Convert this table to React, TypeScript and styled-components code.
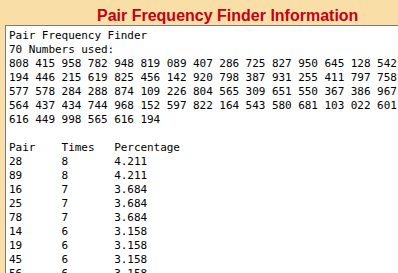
import React from "react";
import styled, { createGlobalStyle } from "styled-components";

const Global = createGlobalStyle`
  html, body {
    margin: 0;
    padding: 0;
    background: #f9dea8;
    overflow: hidden;
  }
  #root {
    width: 398px;
    height: 273px;
  }
`;

const Page = styled.div`
  width: 398px;
  height: 273px;
  display: flex;
  flex-direction: column;
  background: #f9dea8;
  overflow: hidden;
`;

const Header = styled.header`
  height: 25px;
  flex: none;
  display: flex;
  align-items: flex-end;
  padding-left: 97px;
  box-sizing: border-box;
`;

const Title = styled.h1`
  margin: 0;
  font-family: "Liberation Sans", Arial, sans-serif;
  font-weight: bold;
  font-size: 16px;
  line-height: 18px;
  color: #c60012;
  white-space: nowrap;
`;

const TextBox = styled.div`
  flex: 1;
  margin-left: 5px;
  background: #ffffff;
  border-top: 1px solid #7c7c7c;
  border-left: 1px solid #7c7c7c;
  padding: 3px 0 0 3px;
  overflow: hidden;
  font-family: "DejaVu Sans Mono", "Liberation Mono", monospace;
  font-size: 11px;
  line-height: 14px;
  letter-spacing: -0.05px;
  color: #000000;
`;

const Line = styled.div`
  white-space: pre;
  height: 14px;
`;

const Row = styled.div`
  display: grid;
  grid-template-columns: 52.6px 52.6px auto;
  height: 14px;
  white-space: pre;
`;

const numbers = [
  "808 415 958 782 948 819 089 407 286 725 827 950 645 128 542",
  "194 446 215 619 825 456 142 920 798 387 931 255 411 797 758",
  "577 578 284 288 874 109 226 804 565 309 651 550 367 386 967",
  "564 437 434 744 968 152 597 822 164 543 580 681 103 022 601",
  "616 449 998 565 616 194",
];

const rows: [string, string, string][] = [
  ["Pair", "Times", "Percentage"],
  ["28", "8", "4.211"],
  ["89", "8", "4.211"],
  ["16", "7", "3.684"],
  ["25", "7", "3.684"],
  ["78", "7", "3.684"],
  ["14", "6", "3.158"],
  ["19", "6", "3.158"],
  ["45", "6", "3.158"],
  ["56", "6", "3.158"],
];

export default function App() {
  return (
    <>
      <Global />
      <Page>
        <Header>
          <Title>Pair Frequency Finder Information</Title>
        </Header>
        <TextBox>
          <Line>Pair Frequency Finder</Line>
          <Line>70 Numbers used:</Line>
          {numbers.map((n, i) => (
            <Line key={i}>{n}</Line>
          ))}
          <Line> </Line>
          {rows.map((r, i) => (
            <Row key={i}>
              <span>{r[0]}</span>
              <span>{r[1]}</span>
              <span>{r[2]}</span>
            </Row>
          ))}
        </TextBox>
      </Page>
    </>
  );
}
